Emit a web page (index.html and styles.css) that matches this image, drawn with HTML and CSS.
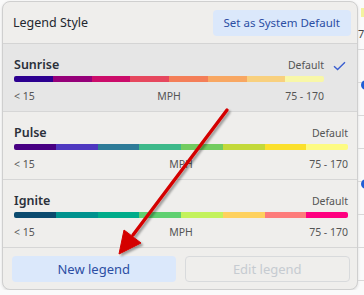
FILE: index.html
```html
<!DOCTYPE html>
<html lang="en">
<head>
    <meta charset="UTF-8">
    <meta name="viewport" content="width=device-width, initial-scale=1.0">
    <title>Legend Style</title>
    <link rel="stylesheet" href="styles.css">
</head>
<body>
    <div class="page">
        <div class="panel">
            <!-- Шапка -->
            <div class="panel-head">
                <span class="panel-title">Legend Style</span>
                <button class="btn-soft">Set as System Default</button>
            </div>

            <!-- Список легенд -->
            <div class="legend selected">
                <div class="legend-main">
                    <div class="legend-top">
                        <span class="legend-name">Sunrise</span>
                        <span class="legend-tag">Default</span>
                    </div>
                    <div class="bar">
                        <span style="background:#2c0090"></span>
                        <span style="background:#950079"></span>
                        <span style="background:#cb0c6a"></span>
                        <span style="background:#e6475e"></span>
                        <span style="background:#f47e58"></span>
                        <span style="background:#f8a762"></span>
                        <span style="background:#f8d07e"></span>
                        <span style="background:#f8f7a8"></span>
                    </div>
                    <div class="legend-scale">
                        <span>&lt; 15</span>
                        <span class="mid">MPH</span>
                        <span class="end">75 - 170</span>
                    </div>
                </div>
                <div class="legend-check">
                    <svg width="13" height="10" viewBox="0 0 13 10"><path d="M1 5.2 L4.6 8.6 L12 1.2" fill="none" stroke="#3b5fd0" stroke-width="1.4"/></svg>
                </div>
            </div>

            <div class="legend">
                <div class="legend-main">
                    <div class="legend-top">
                        <span class="legend-name">Pulse</span>
                        <span class="legend-tag">Default</span>
                    </div>
                    <div class="bar">
                        <span style="background:#480082"></span>
                        <span style="background:#4e38c0"></span>
                        <span style="background:#2e7b98"></span>
                        <span style="background:#3db98a"></span>
                        <span style="background:#72cc60"></span>
                        <span style="background:#c3d93a"></span>
                        <span style="background:#fbe02c"></span>
                        <span style="background:#fdfb82"></span>
                    </div>
                    <div class="legend-scale">
                        <span>&lt; 15</span>
                        <span class="mid">MPH</span>
                        <span class="end">75 - 170</span>
                    </div>
                </div>
            </div>

            <div class="legend">
                <div class="legend-main">
                    <div class="legend-top">
                        <span class="legend-name">Ignite</span>
                        <span class="legend-tag">Default</span>
                    </div>
                    <div class="bar">
                        <span style="background:#0b4a6e"></span>
                        <span style="background:#00928e"></span>
                        <span style="background:#00ac8a"></span>
                        <span style="background:#5fd070"></span>
                        <span style="background:#c3f25c"></span>
                        <span style="background:#fed15e"></span>
                        <span style="background:#fd7b7b"></span>
                        <span style="background:#ff0080"></span>
                    </div>
                    <div class="legend-scale">
                        <span>&lt; 15</span>
                        <span class="mid">MPH</span>
                        <span class="end">75 - 170</span>
                    </div>
                </div>
            </div>

            <!-- Кнопки -->
            <div class="panel-foot">
                <button class="btn-soft btn-wide">New legend</button>
                <button class="btn-ghost btn-wide" disabled>Edit legend</button>
            </div>
        </div>

        <!-- Край таблицы за панелью -->
        <div class="behind">
            <div class="behind-hi"></div>
            <div class="behind-row">7</div>
            <div class="behind-row"></div>
            <div class="behind-row behind-dot"><span class="dot"></span></div>
            <div class="behind-row"></div>
            <div class="behind-row"></div>
            <div class="behind-row behind-dot"><span class="dot"></span></div>
            <div class="behind-row"></div>
            <div class="behind-row"></div>
        </div>
    </div>

    <!-- Стрелка-указатель поверх -->
    <svg class="arrow" width="364" height="295" viewBox="0 0 364 295">
        <defs>
            <filter id="shade" x="-20%" y="-20%" width="140%" height="140%">
                <feDropShadow dx="2" dy="2" stdDeviation="1.3" flood-color="#000" flood-opacity="0.35"/>
            </filter>
        </defs>
        <g filter="url(#shade)" fill="#d40000" stroke="#d40000">
            <line x1="227" y1="110" x2="133" y2="235" stroke-width="3.4" stroke-linecap="round"/>
            <polygon points="119,254 124,230 141,243" stroke-width="1" stroke-linejoin="round"/>
        </g>
    </svg>
</body>
</html>
```

FILE: styles.css
```css
body {
    margin: 0;
    font-family: "Noto Sans", "Open Sans", sans-serif;
    background-color: #fafafa;
    color: #2b303a;
}
.page {
    display: flex;
    align-items: flex-start;
    padding: 1px 0 0 2px;
}
.panel {
    width: 354px;
    background-color: #efeeec;
    border: 1px solid #cfcfcf;
    border-radius: 8px;
    box-shadow: 0 1px 3px rgba(0, 0, 0, 0.12);
    overflow: hidden;
    flex: 0 0 auto;
}
.panel-head {
    height: 41px;
    display: flex;
    align-items: center;
    justify-content: space-between;
    padding: 0 6px 0 10px;
    border-bottom: 1px solid #d4d4d4;
}
.panel-title {
    font-size: 12.5px;
    color: #23272f;
}
.btn-soft {
    box-sizing: border-box;
    height: 26px;
    padding: 0 11px;
    border: none;
    border-radius: 4px;
    background-color: #dbe8fb;
    color: #2c4ea3;
    font-family: inherit;
    font-size: 11.5px;
    cursor: pointer;
}
.btn-ghost {
    box-sizing: border-box;
    height: 26px;
    border: 1px solid #d8dadc;
    border-radius: 4px;
    background-color: transparent;
    color: #c6cbd1;
    font-family: inherit;
}
.btn-wide {
    flex: 1 1 0;
    padding: 0;
    font-size: 13px;
}
.legend {
    display: flex;
    padding: 12px 9px 7px 11px;
    height: 48px;
    border-bottom: 1px solid #d6d6d6;
}
.legend.selected {
    background-color: #e6e6e6;
}
.legend-main {
    flex: 1;
}
.legend-top {
    display: flex;
    justify-content: space-between;
    align-items: baseline;
    height: 18px;
    line-height: 18px;
}
.legend-name {
    font-size: 12.5px;
    font-weight: 600;
    color: #2b303a;
}
.legend-tag {
    font-size: 10.5px;
    color: #555;
}
.bar {
    display: flex;
    height: 6px;
    margin-top: 2px;
    border-radius: 2px;
    overflow: hidden;
}
.bar span {
    flex: 1;
}
.legend-scale {
    display: grid;
    grid-template-columns: 1fr auto 1fr;
    margin-top: 6px;
    font-size: 10.5px;
    line-height: 16px;
    color: #555;
}
.legend-scale .mid {
    text-align: center;
}
.legend-scale .end {
    text-align: right;
}
.legend-check {
    flex: 0 0 24px;
    display: flex;
    justify-content: flex-end;
    padding-top: 5px;
    padding-right: 2px;
    box-sizing: border-box;
}
.panel-foot {
    display: flex;
    gap: 9px;
    padding: 8px 7px 7px 9px;
}
.behind {
    flex: 1;
    overflow: hidden;
    padding-top: 7px;
}
.behind-hi {
    height: 9px;
    background-color: #f3f3a0;
    margin-left: 3px;
}
.behind-row {
    height: 32px;
    border-bottom: 1px solid #d8d8d8;
    font-size: 11px;
    color: #444;
    display: flex;
    align-items: center;
}
.behind-dot {
    align-items: flex-start;
}
.dot {
    width: 10px;
    height: 10px;
    border-radius: 50%;
    background-color: #1f5fd6;
    margin: -3px 0 0 3px;
    flex: 0 0 auto;
}
.arrow {
    position: absolute;
    top: 0;
    left: 0;
    pointer-events: none;
}
```
